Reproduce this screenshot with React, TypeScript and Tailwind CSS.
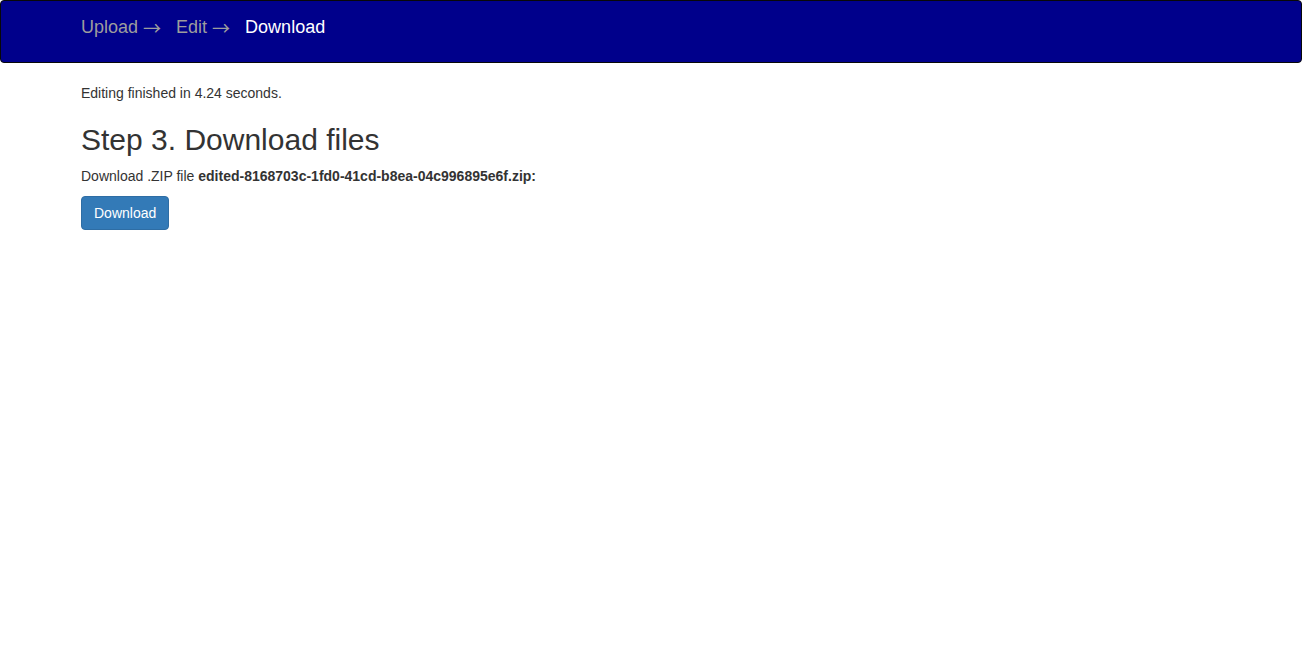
import React from "react";

const steps = [
  { label: "Upload", arrow: true, active: false },
  { label: "Edit", arrow: true, active: false },
  { label: "Download", arrow: false, active: true },
];

const App: React.FC = () => {
  return (
    <div className="min-h-screen bg-white font-['Liberation_Sans',Arial,sans-serif] text-[14px] leading-[20px] text-[#333]">
      <nav className="h-[63px] rounded-[4px] border border-[#080808] bg-[#00008b]">
        <div className="mx-auto w-[1170px] px-[15px]">
          <ul className="flex gap-[15px] pt-[16px] text-[18px] leading-[20px]">
            {steps.map((s) => (
              <li
                key={s.label}
                className={s.active ? "text-white" : "text-[#9d9d9d]"}
              >
                {s.label}{" "}
                {s.arrow && (
                  <span className="font-['Noto_Sans_CJK_SC',sans-serif] leading-[0] align-[-2px]">→</span>
                )}
              </li>
            ))}
          </ul>
        </div>
      </nav>
      <div className="mx-auto mt-[20px] w-[1170px] px-[15px]">
        <p>Editing finished in 4.24 seconds.</p>
        <h2 className="mt-[20px] mb-[10px] text-[30px] leading-[33px] font-medium">
          Step 3. Download files
        </h2>
        <p className="mb-[10px]">
          Download .ZIP file{" "}
          <b className="font-bold">edited-8168703c-1fd0-41cd-b8ea-04c996895e6f.zip:</b>
        </p>
        <button className="rounded-[4px] border border-[#2e6da4] bg-[#337ab7] px-[12px] py-[6px] text-[14px] leading-[20px] text-white">
          Download
        </button>
      </div>
    </div>
  );
};

export default App;
